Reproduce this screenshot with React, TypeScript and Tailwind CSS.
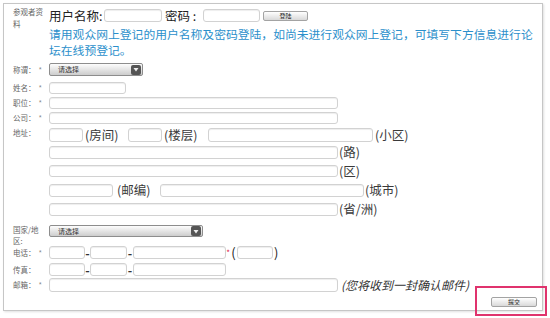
import React from "react";
import clsx from "clsx";

// 小输入框，宽度由调用处传入
const Field = ({ className }: { className?: string }) => (
  <input
    type="text"
    className={clsx(
      "h-full shrink-0 rounded-[3px] border border-[#d2d2d2] bg-white shadow-[inset_0_1px_1px_rgba(0,0,0,0.07)] outline-none",
      className
    )}
  />
);

const Select = ({ className }: { className?: string }) => (
  <div
    className={clsx(
      "flex h-full shrink-0 items-center rounded-[2px] border border-[#8d8d8d] bg-linear-to-b from-[#fdfdfd] to-[#cdcdcd]",
      className
    )}
  >
    <span className="flex-1 pl-[8px] text-[7px] leading-none text-[#333]">请选择</span>
    <div className="mr-[1px] flex h-[10px] w-[10px] items-center justify-center rounded-[2px] bg-[#555]">
      <svg width="6" height="5" viewBox="0 0 6 5">
        <path d="M0.5 1 L5.5 1 L3 4.5 Z" fill="#eee" />
      </svg>
    </div>
  </div>
);

const Label = ({ text, req }: { text: string; req?: boolean }) => (
  <div className="w-[36px] shrink-0 whitespace-nowrap text-[7.5px] leading-[10px] text-[#666]">
    {text}
    {req && <span className="ml-[3px] text-[#888]">*</span>}
  </div>
);

const Paren = ({ text, className }: { text: string; className?: string }) => (
  <span className={clsx("shrink-0 whitespace-nowrap text-[12.5px] leading-none text-[#3a3a3a]", className)}>
    {text}
  </span>
);

const Dash = ({ className }: { className?: string }) => (
  <span className={clsx("shrink-0 text-center text-[12px] font-bold leading-none text-[#333]", className)}>
    -
  </span>
);

export default function App() {
  return (
    <div className="relative h-[318px] w-[550px] bg-white font-['Noto_Sans_CJK_SC','Liberation_Sans',sans-serif]">
      <div className="ml-[3px] mt-[3px] flex h-[308px] w-[540px] flex-col border border-[#c6c6c6] pl-[9px] pr-[5px] shadow-[1px_1px_2px_rgba(0,0,0,0.12)]">
        {/* 参观者资料 */}
        <div className="flex">
          <div className="w-[36px] shrink-0 pt-[2px]">
            <div className="w-[31px] text-[7.5px] leading-[12px] text-[#666]">参观者资料</div>
          </div>
          <div className="flex flex-col">
            <div className="mt-[5px] flex h-[13px] items-center">
              <span className="w-[55px] shrink-0 whitespace-nowrap pt-[2px] text-[12.5px] leading-none text-[#222]">用户名称:</span>
              <Field className="w-[58px]" />
              <span className="w-[41px] shrink-0 whitespace-nowrap pl-[3px] pt-[2px] text-[12.5px] leading-none text-[#222]">密码 :</span>
              <Field className="w-[57px]" />
              <button className="ml-[3px] h-[10px] w-[45px] rounded-[2px] border border-[#a3a3a3] bg-linear-to-b from-white to-[#d9d9d9] text-[6px] leading-none text-[#222]">
                登陆
              </button>
            </div>
            <p className="mt-[4px] w-[488px] text-[11.8px] leading-[16px] text-[#2b8fcb]">
              请用观众网上登记的用户名称及密码登陆，如尚未进行观众网上登记，可填写下方信息进行论坛在线预登记。
            </p>
          </div>
        </div>

        <div className="mt-[5px] flex h-[13px] items-center">
          <Label text="称谓：" req />
          <Select className="w-[94px]" />
        </div>

        <div className="mt-[6px] flex h-[12px] items-center">
          <Label text="姓名：" req />
          <Field className="w-[77px]" />
        </div>

        <div className="mt-[3px] flex h-[12px] items-center">
          <Label text="职位：" req />
          <Field className="w-[289px]" />
        </div>

        <div className="mt-[3px] flex h-[12px] items-center">
          <Label text="公司：" req />
          <Field className="w-[289px]" />
        </div>

        {/* 地址 */}
        <div className="mt-[4px] flex h-[14px] items-center">
          <div className="w-[36px] shrink-0 self-start text-[7.5px] leading-[10px] text-[#666]">地址：</div>
          <Field className="w-[34px]" />
          <Paren text="(房间)" className="w-[45px] pl-[2px]" />
          <Field className="w-[34px]" />
          <Paren text="(楼层)" className="w-[46px] pl-[2px]" />
          <Field className="w-[165px]" />
          <Paren text="(小区)" className="pl-[2px]" />
        </div>

        <div className="mt-[4px] flex h-[13px] items-center pl-[36px]">
          <Field className="w-[289px]" />
          <Paren text="(路)" className="pl-[1px]" />
        </div>

        <div className="mt-[6px] flex h-[12px] items-center pl-[36px]">
          <Field className="w-[289px]" />
          <Paren text="(区)" className="pl-[1px]" />
        </div>

        <div className="mt-[7px] flex h-[13px] items-center pl-[36px]">
          <Field className="w-[64px]" />
          <Paren text="(邮编)" className="w-[47px] pl-[4px]" />
          <Field className="w-[204px]" />
          <Paren text="(城市)" className="pl-[1px]" />
        </div>

        <div className="mt-[6px] flex h-[13px] items-center pl-[36px]">
          <Field className="w-[289px]" />
          <Paren text="(省/洲)" className="pl-[1px]" />
        </div>

        <div className="mt-[9px] flex h-[12px] items-start">
          <div className="w-[36px] shrink-0 -mt-[1px]">
            <div className="w-[31px] text-[7.5px] leading-[11px] text-[#666]">国家/地区:</div>
          </div>
          <Select className="w-[154px]" />
        </div>

        {/* 电话 */}
        <div className="mt-[9px] flex h-[13px] items-center">
          <Label text="电话：" req />
          <Field className="w-[36px]" />
          <Dash className="w-[5px]" />
          <Field className="w-[37px]" />
          <Dash className="w-[6px]" />
          <Field className="w-[93px]" />
          <span className="w-[4px] shrink-0 text-center text-[8px] leading-none text-[#e0204a]">*</span>
          <span className="w-[7px] shrink-0 text-center text-[13px] leading-none text-[#222]">(</span>
          <Field className="w-[36px]" />
          <span className="shrink-0 pl-[1px] text-[13px] leading-none text-[#222]">)</span>
        </div>

        <div className="mt-[4px] flex h-[13px] items-center">
          <Label text="传真：" />
          <Field className="w-[36px]" />
          <Dash className="w-[5px]" />
          <Field className="w-[37px]" />
          <Dash className="w-[6px]" />
          <Field className="w-[93px]" />
        </div>

        <div className="mt-[2px] flex h-[14px] items-center">
          <Label text="邮箱：" req />
          <Field className="w-[289px]" />
          <span className="shrink-0 whitespace-nowrap pl-[3px] text-[12px] italic leading-none text-[#333]">
            (您将收到一封确认邮件)
          </span>
        </div>

        <div className="mt-[5px] flex justify-end">
          <button className="h-[10px] w-[46px] rounded-[2px] border border-[#a3a3a3] bg-linear-to-b from-white to-[#d9d9d9] text-[6px] leading-none text-[#222]">
            提交
          </button>
        </div>
      </div>

      {/* 标注框 */}
      <div className="absolute left-[475px] top-[283px] h-[30px] w-[72px] border-2 border-[#e0336d]" />
    </div>
  );
}
